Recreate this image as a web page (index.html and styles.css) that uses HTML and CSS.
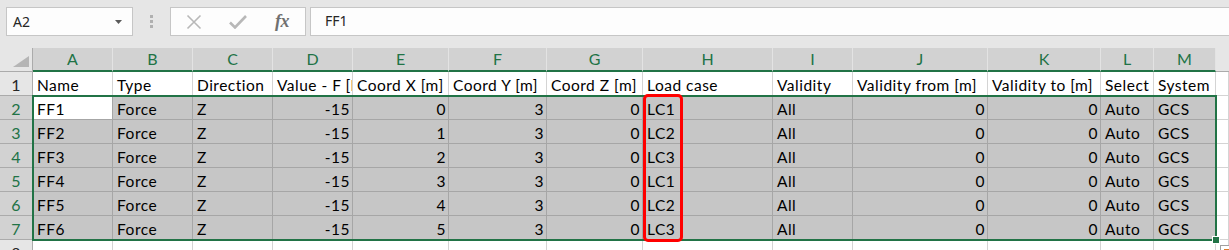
FILE: index.html
```html
<!DOCTYPE html>
<html>
<head>
<meta charset="utf-8">
<link rel="stylesheet" href="styles.css">
</head>
<body>
<div class="app">
  <div class="fbar">
    <div class="namebox">
      <span class="nb-text">A2</span>
      <svg class="caret" width="8" height="5" viewBox="0 0 8 5"><path d="M0 0H7L3.5 4Z" fill="#5a5a5a"/></svg>
    </div>
    <div class="grip"><i></i><i></i><i></i></div>
    <div class="fxbox">
      <svg class="ico-x" width="16" height="16" viewBox="0 0 16 16"><path d="M1.5 1.5L14.5 14.5M14.5 1.5L1.5 14.5" stroke="#b8b8b8" stroke-width="1.6" fill="none"/></svg>
      <svg class="ico-ok" width="18" height="14" viewBox="0 0 18 14"><path d="M1 7.5L6 12.5L17 1" stroke="#b8b8b8" stroke-width="2.6" fill="none"/></svg>
      <span class="fx">fx</span>
    </div>
    <div class="formula">FF1</div>
  </div>

  <div class="sheet">
    <div class="grid">
      <!-- header row -->
      <div class="corner"><svg width="16" height="11" viewBox="0 0 16 11"><path d="M16 0V11H0Z" fill="#b5b5b5"/></svg></div>
      <div class="ch">A</div><div class="ch">B</div><div class="ch">C</div><div class="ch">D</div><div class="ch">E</div><div class="ch">F</div><div class="ch">G</div><div class="ch">H</div><div class="ch">I</div><div class="ch">J</div><div class="ch">K</div><div class="ch">L</div><div class="ch">M</div><div class="ch off"></div>

      <!-- row 1 -->
      <div class="rh">1</div>
      <div class="c">Name</div><div class="c">Type</div><div class="c">Direction</div><div class="c">Value - F [kN]</div><div class="c">Coord X [m]</div><div class="c">Coord Y [m]</div><div class="c">Coord Z [m]</div><div class="c">Load case</div><div class="c">Validity</div><div class="c">Validity from [m]</div><div class="c">Validity to [m]</div><div class="c">Select</div><div class="c">System</div><div class="c"></div>

      <!-- row 2 -->
      <div class="rh sel">2</div>
      <div class="c active">FF1</div><div class="c s">Force</div><div class="c s">Z</div><div class="c s r">-15</div><div class="c s r">0</div><div class="c s r">3</div><div class="c s r">0</div><div class="c s">LC1</div><div class="c s">All</div><div class="c s r">0</div><div class="c s r">0</div><div class="c s">Auto</div><div class="c s">GCS</div><div class="c"></div>

      <!-- row 3 -->
      <div class="rh sel">3</div>
      <div class="c s">FF2</div><div class="c s">Force</div><div class="c s">Z</div><div class="c s r">-15</div><div class="c s r">1</div><div class="c s r">3</div><div class="c s r">0</div><div class="c s">LC2</div><div class="c s">All</div><div class="c s r">0</div><div class="c s r">0</div><div class="c s">Auto</div><div class="c s">GCS</div><div class="c"></div>

      <!-- row 4 -->
      <div class="rh sel">4</div>
      <div class="c s">FF3</div><div class="c s">Force</div><div class="c s">Z</div><div class="c s r">-15</div><div class="c s r">2</div><div class="c s r">3</div><div class="c s r">0</div><div class="c s">LC3</div><div class="c s">All</div><div class="c s r">0</div><div class="c s r">0</div><div class="c s">Auto</div><div class="c s">GCS</div><div class="c"></div>

      <!-- row 5 -->
      <div class="rh sel">5</div>
      <div class="c s">FF4</div><div class="c s">Force</div><div class="c s">Z</div><div class="c s r">-15</div><div class="c s r">3</div><div class="c s r">3</div><div class="c s r">0</div><div class="c s">LC1</div><div class="c s">All</div><div class="c s r">0</div><div class="c s r">0</div><div class="c s">Auto</div><div class="c s">GCS</div><div class="c"></div>

      <!-- row 6 -->
      <div class="rh sel">6</div>
      <div class="c s">FF5</div><div class="c s">Force</div><div class="c s">Z</div><div class="c s r">-15</div><div class="c s r">4</div><div class="c s r">3</div><div class="c s r">0</div><div class="c s">LC2</div><div class="c s">All</div><div class="c s r">0</div><div class="c s r">0</div><div class="c s">Auto</div><div class="c s">GCS</div><div class="c"></div>

      <!-- row 7 -->
      <div class="rh sel">7</div>
      <div class="c s">FF6</div><div class="c s">Force</div><div class="c s">Z</div><div class="c s r">-15</div><div class="c s r">5</div><div class="c s r">3</div><div class="c s r">0</div><div class="c s">LC3</div><div class="c s">All</div><div class="c s r">0</div><div class="c s r">0</div><div class="c s">Auto</div><div class="c s">GCS</div><div class="c"></div>

      <!-- row 8 -->
      <div class="rh">8</div>
      <div class="c"></div><div class="c"></div><div class="c"></div><div class="c"></div><div class="c"></div><div class="c"></div><div class="c"></div><div class="c"></div><div class="c"></div><div class="c"></div><div class="c"></div><div class="c"></div><div class="c"></div><div class="c"></div>
    </div>

    <div class="selection"></div>
    <div class="handle"></div>
    <div class="redbox"></div>
    <div class="qa"><span></span></div>
  </div>
</div>
</body>
</html>
```

FILE: styles.css
```css
* { box-sizing: border-box; }
html, body { margin: 0; padding: 0; }
body {
  width: 1229px;
  height: 250px;
  overflow: hidden;
  background: #ffffff;
  font-family: "Lato", "Liberation Sans", sans-serif;
}

/* ---------- formula bar ---------- */
.fbar {
  height: 48px;
  background: #e6e6e6;
  display: flex;
  align-items: flex-start;
  padding-top: 7px;
  padding-left: 6px;
}
.namebox {
  width: 127px;
  height: 29px;
  background: #fdfdfd;
  border: 1px solid #c6c6c6;
  display: flex;
  align-items: center;
  justify-content: space-between;
  padding: 0 9px 0 6px;
}
.nb-text {
  font-family: "Noto Sans", "Open Sans", sans-serif;
  font-size: 14px;
  color: #262626;
}
.caret { margin-top: 1px; }
.grip {
  width: 37px;
  height: 29px;
  display: flex;
  flex-direction: column;
  align-items: center;
  justify-content: center;
  gap: 2px;
}
.grip i {
  display: block;
  width: 3px;
  height: 3px;
  background: #b0b0b0;
}
.fxbox {
  width: 136px;
  height: 29px;
  background: #fdfdfd;
  border: 1px solid #c6c6c6;
  display: flex;
  align-items: center;
  padding-left: 15px;
}
.ico-x { margin-right: 27px; }
.ico-ok { margin-right: 28px; margin-top: 1px; }
.fx {
  font-family: "Liberation Serif", "DejaVu Serif", serif;
  font-style: italic;
  font-weight: bold;
  font-size: 18px;
  color: #707070;
  letter-spacing: -0.5px;
}
.formula {
  flex: 1;
  height: 29px;
  margin-left: 4px;
  background: #fdfdfd;
  border-top: 1px solid #c6c6c6;
  border-bottom: 1px solid #c6c6c6;
  border-left: 1px solid #c6c6c6;
  padding-left: 14px;
  font-family: "Noto Sans", "Open Sans", sans-serif;
  font-size: 14px;
  line-height: 26px;
  color: #262626;
}

/* ---------- sheet ---------- */
.sheet { position: relative; }
.grid {
  display: grid;
  grid-template-columns: 33px 80px 80px 80px 80px 96px 98px 96px 130px 80px 135px 113px 53px 62px 1fr;
  grid-template-rows: 24px repeat(8, 24px);
  font-size: 15.5px;
}
.corner {
  background: #e6e6e6;
  border-right: 1px solid #ababab;
  border-bottom: 1px solid #ababab;
  display: flex;
  align-items: flex-end;
  justify-content: flex-end;
  padding: 0 3px 4px 0;
}
.ch {
  background: #d2d2d2;
  color: #217346;
  text-align: center;
  border-right: 1px solid #e3e3e3;
  border-bottom: 2px solid #217346;
  line-height: 20px;
  padding-top: 1px;
  font-size: 16px;
}
.ch.off {
  background: #e6e6e6;
  border-bottom: 1px solid #ababab;
  border-right: none;
}
.rh {
  background: #e6e6e6;
  color: #262626;
  text-align: center;
  border-right: 1px solid #ababab;
  border-bottom: 1px solid #ababab;
  line-height: 22px;
  padding-top: 2px;
  font-size: 16px;
}
.rh.sel {
  background: #d2d2d2;
  color: #217346;
  border-bottom-color: #ababab;
}
.c {
  background: #ffffff;
  color: #000000;
  border-right: 1px solid #d4d4d4;
  border-bottom: 1px solid #d4d4d4;
  white-space: nowrap;
  overflow: hidden;
  line-height: 22px;
  letter-spacing: 0.5px;
  padding: 2px 3px 0 4px;
}
.c.s {
  background: #c6c6c6;
  border-right-color: #a6a6a6;
  border-bottom-color: #a6a6a6;
}
.c.active {
  border-right-color: #a6a6a6;
  border-bottom-color: #a6a6a6;
}
.c.r { text-align: right; padding-right: 2px; }

/* overlays */
.selection {
  position: absolute;
  left: 32px;
  top: 47px;
  width: 1185px;
  height: 146px;
  border: 2px solid #217346;
  pointer-events: none;
}
.handle {
  position: absolute;
  left: 1212px;
  top: 188px;
  width: 8px;
  height: 8px;
  background: #217346;
  border: 1px solid #ffffff;
}
.redbox {
  position: absolute;
  left: 643px;
  top: 46px;
  width: 40px;
  height: 148px;
  border: 3px solid #ff0000;
  border-radius: 5px;
}
.qa {
  position: absolute;
  left: 1220px;
  top: 197px;
  width: 20px;
  height: 20px;
  background: #ffffff;
  border: 1px solid #a0a0a0;
}
.qa span {
  position: absolute;
  left: 3px;
  top: 3px;
  width: 5px;
  height: 3px;
  background: #e07b2a;
}
```
